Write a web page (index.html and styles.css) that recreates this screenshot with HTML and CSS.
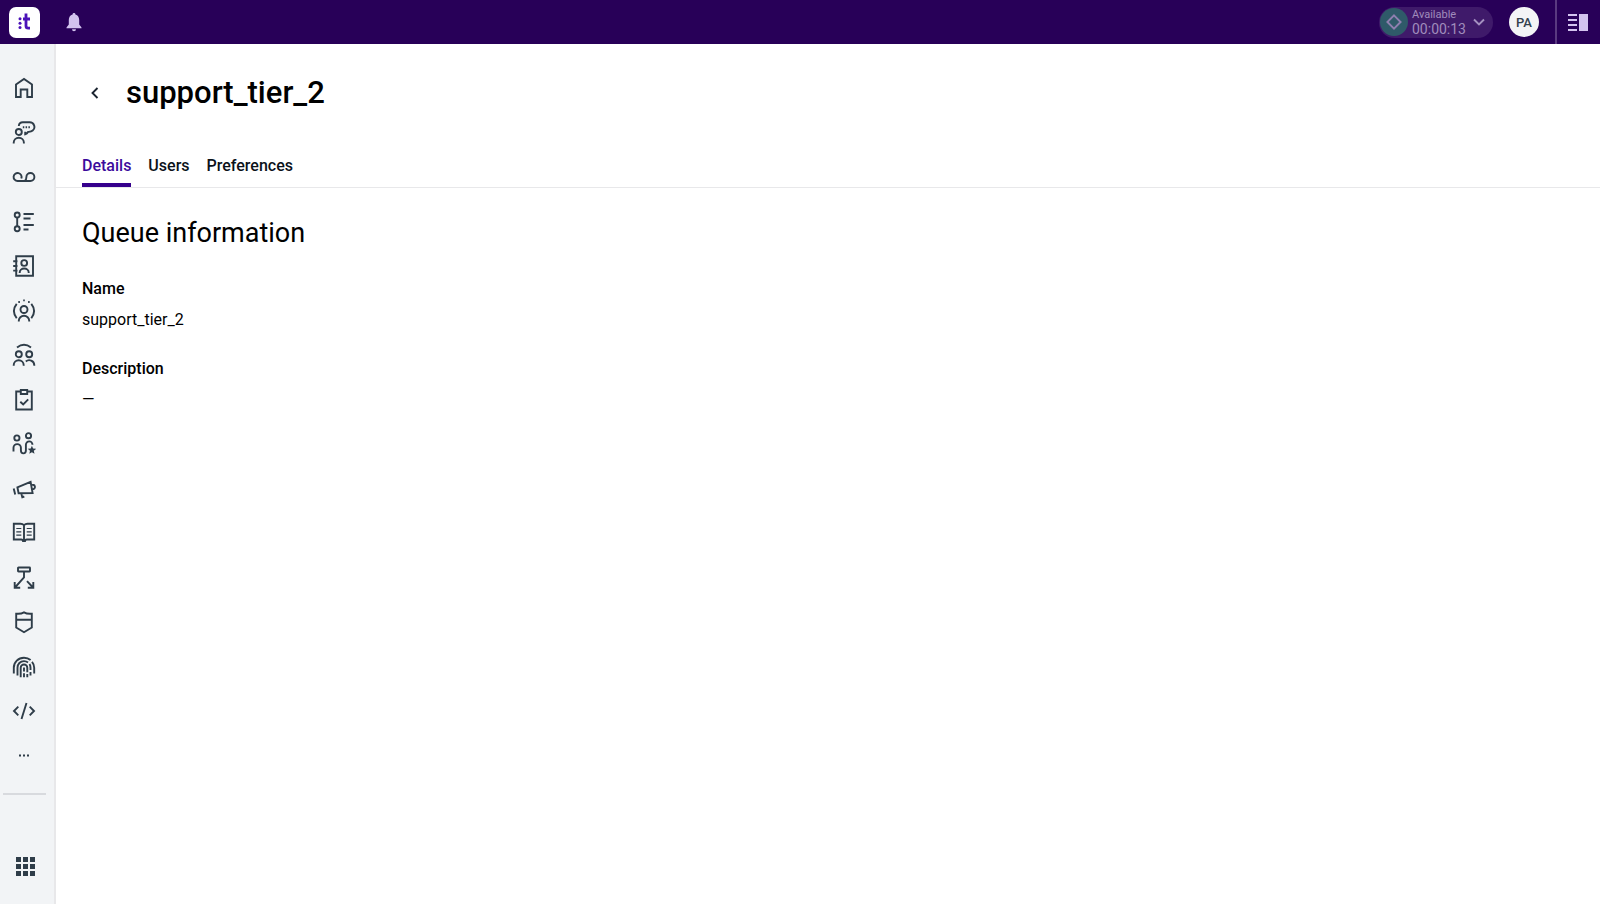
FILE: index.html
```html
<!DOCTYPE html>
<html lang="en">
<head>
    <meta charset="UTF-8">
    <meta name="viewport" content="width=device-width, initial-scale=1.0">
    <title>support_tier_2</title>
    <link rel="stylesheet" href="styles.css">
</head>
<body>
    <header class="topbar">
        <a class="logo" href="#" aria-label="Home">
            <svg width="31" height="31" viewBox="0 0 31 31">
                <g fill="#4b12b8">
                    <circle cx="11" cy="11.8" r="1.5"/>
                    <circle cx="11" cy="16.2" r="1.5"/>
                    <circle cx="11" cy="20.6" r="1.5"/>
                </g>
                <path d="M17 6.5V19q0 2.2 2.2 2.2H21M14 12h7" fill="none" stroke="#4b12b8" stroke-width="2.8"/>
            </svg>
        </a>
        <button class="bell" aria-label="Notifications">
            <svg width="16" height="20" viewBox="0 0 16 20">
                <path d="M8 1c.9 0 1.4.6 1.4 1.4C12 3 13.200 5.200 13.200 8v4.500l2.300 3v.8H.5v-.8l2.300-3V8C2.800 5.200 4 3 6.600 2.400 6.600 1.600 7.100 1 8 1zM6 17.200h4a2 2 0 0 1-4 0z" fill="#d3c3ef"/>
            </svg>
        </button>
        <button class="status">
            <span class="status-icon">
                <svg width="16" height="16" viewBox="0 0 16 16" fill="none" stroke="#8f7fb0" stroke-width="1.9">
                    <path d="M8 1.400 14.600 8 8 14.600 1.400 8z"/>
                </svg>
            </span>
            <span class="status-text">
                <span class="status-name">Available</span>
                <span class="status-time">00:00:13</span>
            </span>
            <svg width="12" height="8" viewBox="0 0 12 8" fill="none" stroke="#a490c0" stroke-width="1.9">
                <path d="M1 1.500l5 5 5-5"/>
            </svg>
        </button>
        <button class="avatar">PA</button>
        <button class="panel" aria-label="Toggle panel">
            <svg width="20" height="17" viewBox="0 0 20 17" fill="#d3c3ef">
                <path d="M0 0h9v2H0zM0 5h9v2H0zM0 10h9v2H0zM0 15h9v2H0zM11 0h9v17h-9z"/>
            </svg>
        </button>
    </header>

    <div class="layout">
        <nav class="sidebar">
            <ul class="nav-list">
                <li><a href="#" aria-label="Home"><svg class="icon" viewBox="0 0 24 24"><path d="M4 8.500 12 3l8 5.500V21h-4.700v-7.500H8.700V21H4z"/></svg></a></li>
                <li><a href="#" aria-label="Conversations"><svg class="icon" viewBox="0 0 24 24"><circle cx="6.800" cy="11" r="3"/><path d="M1.700 22.500v-.7a5.100 5 0 0 1 10.200 0v.7M6.800 5C7 2.800 8.600 1.300 10.800 1.300h6.900a4.700 4.700 0 0 1 3 8.300c-1.600 1.300-3.300 1.200-4.700 1.400-.6 1.200-1.400 1.900-2.800 2.200v-2.500"/><path d="M10.800 6.200h1.500M13.600 6.200h1.500M16.400 6.200h1.500"/></svg></a></li>
                <li><a href="#" aria-label="Voicemail"><svg class="icon" viewBox="0 0 24 24"><path d="M9.300 13.500A4 4 0 1 0 5.700 16h12.700a4 4 0 1 0-4-4c0 1.800-.5 3-1.600 4"/></svg></a></li>
                <li><a href="#" aria-label="Queues"><svg class="icon" viewBox="0 0 24 24"><circle cx="5.200" cy="5" r="2.500"/><circle cx="5.200" cy="18.700" r="2.500"/><path d="M5.200 7.500v8.700M11.500 4h10.300M11.500 8.500h7M11.500 15h10.300M11.500 19.500h5"/></svg></a></li>
                <li><a href="#" aria-label="Contacts"><svg class="icon" viewBox="0 0 24 24"><path d="M4.200 2.200H21v19.500H4.200zM1.200 7.300h4.300M1.200 12h4.300M1.200 16.600h4.300"/><circle cx="12.200" cy="9" r="2.900"/><path d="M7.700 19v-.5a4.500 4 0 0 1 9 0v.5"/></svg></a></li>
                <li><a href="#" aria-label="Live"><svg class="icon" viewBox="0 0 24 24"><circle cx="12" cy="10.500" r="3.500"/><path d="M6.800 22.500v-.7a5.200 5 0 0 1 10.400 0v.7M4.700 4.800q-5.600 7 0 14.500M19.300 4.800q5.600 7 0 14.500M6.300 3h1.600M11.200 1.400h1.600M16.100 3h1.600"/></svg></a></li>
                <li><a href="#" aria-label="Teams"><svg class="icon" viewBox="0 0 24 24"><circle cx="6.800" cy="11.200" r="3"/><circle cx="17.200" cy="11.200" r="3"/><path d="M5 4.500q7-5.400 14 0M1.700 22.800v-.5a5 5 0 0 1 10 0v.5M13.800 18.500c3-2.600 8.500-1.200 8.500 3.800v.5"/></svg></a></li>
                <li><a href="#" aria-label="Tasks"><svg class="icon" viewBox="0 0 24 24"><path d="M8.800 3.500H4.200v18h15.600v-18h-4.600M8.800 2h6.400v4H8.800zM8.300 13.700l2.900 2.800 5-5.200"/></svg></a></li>
                <li><a href="#" aria-label="Quality"><svg class="icon" viewBox="0 0 24 24"><circle cx="4.900" cy="6" r="2.600"/><circle cx="16.500" cy="3.700" r="2.600"/><path d="M1.500 19.500v-3.700a3.700 3.700 0 0 1 7.400 0v2.400a2.300 2.900 0 0 0 5 0v-5.500a3.300 3.300 0 0 1 6.600 0"/><path class="solid" d="M19.900 13.700l1.200 2.900 3 .2-2.300 2 .7 3-2.600-1.600-2.600 1.600.7-3-2.300-2 3-.2z"/></svg></a></li>
                <li><a href="#" aria-label="Campaigns"><svg class="icon" viewBox="0 0 24 24"><path d="M1.700 11.500l1.500 6M5.400 10.300l13.200-5.500 2 11.300-14 .2zM9.300 16.500l1 3.800 2-.8M19.200 8.200c2-.8 3.400-.2 3.700 1.400.3 1.500-.8 2.600-2.900 2.700"/></svg></a></li>
                <li><a href="#" aria-label="Knowledge"><svg class="icon" viewBox="0 0 24 24"><path d="M12 4.200c-1-1-2.200-1.400-3.500-1.400H1.800v15.700h7.500c1.200 0 1.500.5 1.700 1.600h2c.2-1.100.5-1.600 1.700-1.600h7.500V2.800h-6.700c-1.300 0-2.500.4-3.500 1.400zM12 4.200V20"/><path class="thin" d="M4.300 7.500h5M4.300 10.800h5M4.300 14.100h5M14.700 7.500h5M14.700 10.800h5M14.700 14.100h5"/></svg></a></li>
                <li><a href="#" aria-label="Flows"><svg class="icon" viewBox="0 0 24 24"><rect x="6" y="1.500" width="12" height="4" rx=".5"/><path d="M12 5.500v6L3 21.500M15 15.200l6 6.300M2.700 16v5.700h5.500M21.300 16v5.700h-5.500"/></svg></a></li>
                <li><a href="#" aria-label="Guardian"><svg class="icon" viewBox="0 0 24 24"><path d="M4.200 3.700c3.200.3 5.700-.1 7.800-1.300 2.100 1.200 4.600 1.600 7.800 1.300v13.800L12 22.200l-7.800-4.700zM4.200 9.700h15.600"/></svg></a></li>
                <li><a href="#" aria-label="Identity"><svg class="icon" viewBox="0 0 24 24"><path d="M1.800 18.500v-5.700C1.800 7 6.300 2.800 12 2.800c2.600 0 4.800.8 6.600 2.300M20 6.800c1.400 1.600 2.200 3.700 2.200 6v5.700M5.500 20.500v-7.700c0-3.900 2.800-6.700 6.500-6.700 1.500 0 3 .5 4 1.300M17.500 9c.7 1.100 1 2.400 1 3.800v2.300M18.500 17v3.500M8.700 22.200v-9.400a3.300 3.300 0 0 1 6.600 0v4.400M15.300 19v3.200M12 12.500v4M12 18.300v4"/></svg></a></li>
                <li><a href="#" aria-label="Developer"><svg class="icon" viewBox="0 0 24 24"><path d="M6.300 7.700 2 12l4.300 4.300M17.700 7.700 22 12l-4.300 4.300M14.500 4l-5 16"/></svg></a></li>
                <li><a href="#" aria-label="More"><svg class="icon" viewBox="0 0 24 24"><path class="solid" d="M7 10.500h2v2H7zM11 10.500h2v2h-2zM15 10.500h2v2h-2z"/></svg></a></li>
            </ul>
            <div class="nav-bottom">
                <a href="#" aria-label="Apps"><svg class="apps" viewBox="0 0 19 19"><path d="M0 0h5v5H0zM7 0h5v5H7zM14 0h5v5h-5zM0 7h5v5H0zM7 7h5v5H7zM14 7h5v5h-5zM0 14h5v5H0zM7 14h5v5H7zM14 14h5v5h-5z"/></svg></a>
            </div>
        </nav>

        <main class="content">
            <div class="title-row">
                <button class="back" aria-label="Back">
                    <svg width="8" height="12" viewBox="0 0 8 12" fill="none" stroke="#1b2430" stroke-width="1.9"><path d="M6.500 1 1.500 6l5 5"/></svg>
                </button>
                <h1>support_tier_2</h1>
            </div>
            <div class="tabs">
                <a class="tab active" href="#">Details</a>
                <a class="tab" href="#">Users</a>
                <a class="tab" href="#">Preferences</a>
            </div>
            <section class="info">
                <h2>Queue information</h2>
                <dl>
                    <dt>Name</dt>
                    <dd>support_tier_2</dd>
                    <dt>Description</dt>
                    <dd>—</dd>
                </dl>
            </section>
        </main>
    </div>
</body>
</html>
```
FILE: styles.css
```css
* {
    box-sizing: border-box;
}
body {
    margin: 0;
    height: 100vh;
    display: flex;
    flex-direction: column;
    font-family: Roboto, "Liberation Sans", sans-serif;
    color: #000;
    background: #fff;
}
button {
    border: 0;
    padding: 0;
    background: none;
    font-family: inherit;
    cursor: pointer;
}
svg {
    display: block;
}
.topbar {
    display: flex;
    align-items: center;
    height: 44px;
    flex-shrink: 0;
    padding-left: 9px;
    background: #280058;
}
.logo {
    background: #fff;
    border-radius: 7px;
}
.bell {
    margin-left: 26px;
}
.status {
    display: flex;
    align-items: center;
    width: 114px;
    height: 31px;
    margin-left: auto;
    padding: 0 8px 0 1px;
    border-radius: 16px;
    background: #3f1a6a;
    text-align: left;
}
.status-icon {
    display: flex;
    align-items: center;
    justify-content: center;
    width: 28px;
    height: 28px;
    border-radius: 50%;
    background: #2f5a69;
}
.status-text {
    display: flex;
    flex-direction: column;
    flex: 1;
    margin-left: 4px;
    color: #a08cbc;
}
.status-name {
    font-size: 11px;
    line-height: 13px;
}
.status-time {
    font-size: 14px;
    line-height: 16px;
}
.avatar {
    width: 30px;
    height: 30px;
    margin: 0 16px;
    border-radius: 50%;
    background: #f3f4f6;
    color: #33414d;
    font-size: 13px;
    font-weight: 500;
}
.panel {
    height: 44px;
    padding: 0 12px 0 11px;
    border-left: 2px solid #5a3a80;
}
.layout {
    display: flex;
    flex: 1;
    min-height: 0;
}
.sidebar {
    display: flex;
    flex-direction: column;
    width: 56px;
    flex-shrink: 0;
    padding-top: 22px;
    background: #f2f4f6;
    border-right: 2px solid #e8e8ea;
}
.nav-list {
    display: flex;
    flex-direction: column;
    flex: 1;
    width: 48px;
    margin: 0;
    padding: 0;
    list-style: none;
}
.nav-list li {
    display: flex;
    flex: 1;
    align-items: center;
    justify-content: center;
}
.icon {
    width: 24px;
    height: 24px;
    fill: none;
    stroke: #2f3d49;
    stroke-width: 1.9;
}
.icon .thin {
    stroke-width: 1.2;
}
.icon .solid {
    fill: #2f3d49;
    stroke: none;
}
.nav-bottom {
    display: flex;
    justify-content: center;
    width: 43px;
    height: 111px;
    margin: 15px 0 0 3px;
    padding: 62px 0 0 2px;
    border-top: 2px solid #d8dade;
}
.apps {
    width: 19px;
    height: 19px;
    fill: #2f3d49;
}
.content {
    flex: 1;
}
.title-row {
    display: flex;
    align-items: center;
    gap: 16px;
    padding: 29px 24px 0;
}
.back {
    display: flex;
    align-items: center;
    justify-content: center;
    width: 30px;
    height: 30px;
}
h1 {
    margin: 0;
    font-size: 31px;
    line-height: 40px;
    font-weight: 500;
}
.tabs {
    display: flex;
    gap: 17px;
    margin-top: 33px;
    padding: 0 26px;
    border-bottom: 1px solid #e8e8ea;
}
.tab {
    padding: 10px 0 7px;
    border-bottom: 4px solid transparent;
    color: #0b1219;
    font-size: 16px;
    line-height: 20px;
    font-weight: 500;
    text-decoration: none;
}
.tab.active {
    color: #3b0a9c;
    border-bottom-color: #35008c;
}
.info {
    padding: 27px 26px;
}
h2 {
    margin: 0 0 28px;
    font-size: 27px;
    line-height: 36px;
    font-weight: 400;
}
dl {
    margin: 0;
    font-size: 16px;
    line-height: 20px;
}
dt {
    font-weight: 500;
}
dd {
    margin: 11px 0 29px;
}
```
